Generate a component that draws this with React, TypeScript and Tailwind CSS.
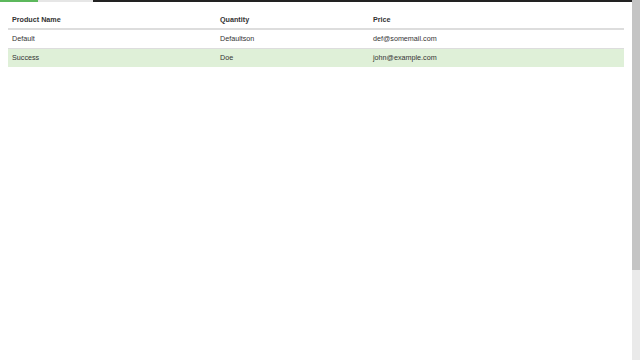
const rows = [
  { name: "Default", qty: "Defaultson", price: "def@somemail.com", success: false },
  { name: "Success", qty: "Doe", price: "john@example.com", success: true },
];

export default function App() {
  return (
    <div
      className="flex h-[360px] w-[640px] overflow-hidden bg-white text-[#333]"
      style={{ fontFamily: '"Liberation Sans", Arial, sans-serif' }}
    >
      <div className="flex w-[632px] flex-col">
        {/* cut-off bar from above */}
        <div className="flex h-[2px]">
          <div className="w-[38px] bg-[#5cb85c]" />
          <div className="w-[55px] bg-[#e6e6e6]" />
          <div className="flex-1 bg-[#222]" />
        </div>

        <div className="px-2 pt-2">
          <table className="w-[616px] border-collapse text-left text-[7.2px]">
            <thead>
              <tr className="h-[19px] border-b-2 border-[#ddd]">
                <th className="w-[208px] px-[4px] pt-[2px] font-bold text-[#333]">Product Name</th>
                <th className="w-[153px] px-[4px] pt-[2px] font-bold text-[#333]">Quantity</th>
                <th className="px-[4px] pt-[2px] font-bold text-[#333]">Price</th>
              </tr>
            </thead>
            <tbody>
              {rows.map((r) => (
                <tr
                  key={r.name}
                  className={`h-[19px] border-t border-[#ddd] ${r.success ? "bg-[#dff0d8]" : ""}`}
                >
                  <td className="px-[4px] pt-[2px]">{r.name}</td>
                  <td className="px-[4px] pt-[2px]">{r.qty}</td>
                  <td className="px-[4px] pt-[2px]">{r.price}</td>
                </tr>
              ))}
            </tbody>
          </table>
        </div>
      </div>

      {/* scrollbar */}
      <div className="flex w-[8px] flex-col bg-[#eaeaea]">
        <div className="h-[270px] bg-[#c4c4c4]" />
      </div>
    </div>
  );
}
